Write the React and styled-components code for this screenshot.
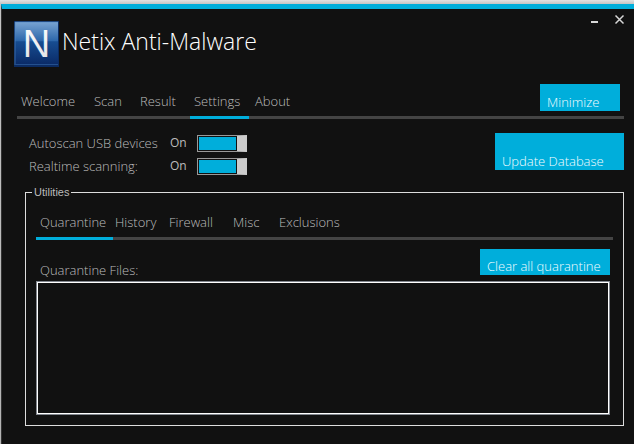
import React, { useState } from "react";
import styled, { createGlobalStyle, css } from "styled-components";

const accent = "#00aedb";
const surface = "#111111";
const rule = "#444444";
const lightFace = css`
  font-family: "Open Sans", "Noto Sans", sans-serif;
  font-weight: 300;
`;

const GlobalStyle = createGlobalStyle`
  * { box-sizing: border-box; }
  body { margin: 0; background: #dcdcdc; }
  button, input, select { font: inherit; margin: 0; border-radius: 0; }
`;

const Desktop = styled.div`
  min-height: 100vh;
  display: flex;
  padding: 4px 0 0 1px;
  background: linear-gradient(#e2e2e2, #c4c4c4 4px, #b4b4b4);
`;

const Window = styled.main`
  ${lightFace}
  flex: 1;
  min-width: 0;
  display: flex;
  flex-direction: column;
  padding: 0 10px 18px 15px;
  border-top: 5px solid ${accent};
  border-left: 1px solid #333333;
  background: ${surface};
  color: #bcbcbc;
  font-size: 13px;
  line-height: 20px;
`;

const Header = styled.header`
  display: flex;
  align-items: flex-start;
  height: 75px;
`;

const Brand = styled.div`
  flex: 1;
  display: flex;
  gap: 3px;
  margin: 12px 0 0 -3px;
`;

const Title = styled.h1`
  margin: 5px 0 0;
  color: #ffffff;
  font-size: 23px;
  font-weight: 300;
  line-height: 30px;
`;

const WindowControls = styled.div`
  display: flex;
  gap: 1px;
  margin-right: -7px;
  padding-top: 1px;
`;

const ControlButton = styled.button`
  width: 24px;
  height: 18px;
  padding: 0;
  border: 0;
  background: transparent;
  color: #d8d8d8;
  svg { display: block; margin: auto; }
`;

const TabRow = styled.div`
  display: flex;
  align-items: flex-start;
  height: ${(p) => p.$height};
  border-bottom: 3px solid ${rule};
`;

const TabList = styled.div`
  flex: 1;
  display: flex;
  align-self: stretch;
`;

const Tab = styled.button`
  flex: none;
  width: ${(p) => p.$width};
  margin-bottom: -3px;
  padding: 0 0 5px ${(p) => p.$inset || "4px"};
  display: flex;
  align-items: flex-end;
  border: 0;
  border-bottom: 3px solid ${(p) => (p.$active ? accent : "transparent")};
  background: transparent;
  color: inherit;
  line-height: 20px;
  white-space: nowrap;
`;

const ActionButton = styled.button`
  flex: none;
  width: ${(p) => p.$width};
  height: ${(p) => p.$height};
  padding: 0 7px;
  display: flex;
  align-items: flex-end;
  border: 0;
  background: ${accent};
  color: #f4fdff;
  line-height: 18px;
  white-space: nowrap;
`;

const MinimizeButton = styled(ActionButton)`
  margin-right: 4px;
`;

const Options = styled.section`
  display: flex;
  align-items: flex-start;
  justify-content: space-between;
  padding: 14px 0 0 12px;
`;

const Switches = styled.div`
  display: grid;
  grid-template-columns: 141px 27px auto;
  row-gap: 3px;
`;

const SwitchRow = styled.label`
  display: grid;
  grid-column: 1 / -1;
  grid-template-columns: subgrid;
  align-items: center;
`;

const SwitchState = styled.span`
  font-size: 12px;
  font-weight: 400;
`;

const Switch = styled.input`
  appearance: none;
  width: 50px;
  height: 17px;
  border: 1px solid #999999;
  border-${(p) => (p.checked ? "right" : "left")}: 10px solid #cccccc;
  outline: 0;
  background: ${(p) => (p.checked ? accent : "#555555")} content-box;
  padding: 1px;
`;

const Utilities = styled.fieldset`
  flex: 1;
  min-width: 0;
  display: flex;
  flex-direction: column;
  margin: 9px 0 0 8px;
  padding: 0 10px 10px;
  border: 1px solid #dddddd;
`;

const Legend = styled.legend`
  margin-left: -4px;
  padding: 0 2px;
  color: #bbbbbb;
  font-family: "Liberation Sans", Arial, sans-serif;
  font-size: 11px;
  font-weight: 400;
  line-height: 14px;
`;

const PanelBody = styled.div`
  flex: 1;
  display: flex;
  flex-direction: column;
  margin-right: 3px;
`;

const PanelHeader = styled.div`
  display: flex;
  align-items: flex-end;
  justify-content: space-between;
  padding: 9px 0 6px 4px;
`;

const FileLabel = styled.label`
  margin-bottom: -5px;
`;

const FileList = styled.select`
  flex: 1;
  width: 100%;
  min-height: 80px;
  border: 1px solid #82878f;
  box-shadow: inset 0 0 0 1px #ffffff;
  outline: 0;
  background: ${surface};
  color: inherit;
`;

const Logo = () => (
  <svg width="45" height="46" viewBox="0 0 45 46" role="img" aria-label="Netix">
    <defs>
      <linearGradient id="tile" x1="0" y1="0" x2="0" y2="1">
        <stop offset="0" stopColor="#78a3d2" />
        <stop offset="0.43" stopColor="#2e68ab" />
        <stop offset="0.46" stopColor="#174d91" />
        <stop offset="1" stopColor="#0a2a66" />
      </linearGradient>
      <linearGradient id="letter" x1="0" y1="0" x2="0" y2="1">
        <stop offset="0" stopColor="#ffffff" />
        <stop offset="1" stopColor="#e0e0e4" />
      </linearGradient>
    </defs>
    <rect width="45" height="46" fill="#0b2b62" />
    <rect x="1" y="1" width="43" height="43" fill="url(#tile)" />
    <path d="M1 44V1H44" fill="none" stroke="#5289c4" strokeOpacity="0.6" />
    <path d="M1 43.5H44" stroke="#24508e" />
    <text
      x="22.5"
      y="36"
      textAnchor="middle"
      fill="url(#letter)"
      fontFamily="Liberation Sans, Arial, sans-serif"
      fontSize="38"
      fontWeight="400"
    >
      N
    </text>
  </svg>
);

const mainTabs = [
  { name: "Welcome", width: "73px" },
  { name: "Scan", width: "46px" },
  { name: "Result", width: "54px" },
  { name: "Settings", width: "59px" },
  { name: "About", width: "60px", inset: "6px" },
];

const utilityTabs = [
  { name: "Quarantine", width: "77px" },
  { name: "History", width: "52px", inset: "2px" },
  { name: "Firewall", width: "64px" },
  { name: "Misc", width: "46px" },
  { name: "Exclusions", width: "72px" },
];

function Tabs({ items, initial, label }) {
  const [current, setCurrent] = useState(initial);
  return (
    <TabList role="tablist" aria-label={label}>
      {items.map(({ name, width, inset }) => (
        <Tab
          key={name}
          type="button"
          role="tab"
          aria-selected={current === name}
          $active={current === name}
          $width={width}
          $inset={inset}
          onClick={() => setCurrent(name)}
        >
          {name}
        </Tab>
      ))}
    </TabList>
  );
}

function SwitchOption({ label }) {
  const [on, setOn] = useState(true);
  return (
    <SwitchRow>
      <span>{label}</span>
      <SwitchState>{on ? "On" : "Off"}</SwitchState>
      <Switch type="checkbox" checked={on} onChange={() => setOn(!on)} />
    </SwitchRow>
  );
}

export default function App() {
  return (
    <>
      <GlobalStyle />
      <Desktop>
        <Window>
          <Header>
            <Brand>
              <Logo />
              <Title>Netix Anti-Malware</Title>
            </Brand>
            <WindowControls>
              <ControlButton type="button" aria-label="Minimize window">
                <svg width="11" height="11" viewBox="0 0 11 11">
                  <path d="M2 8H9" stroke="currentColor" strokeWidth="2" />
                </svg>
              </ControlButton>
              <ControlButton type="button" aria-label="Close window">
                <svg width="11" height="11" viewBox="0 0 11 11">
                  <path d="M1.500 1.500L9.500 9.500M9.500 1.500L1.500 9.500" stroke="currentColor" strokeWidth="1.500" />
                </svg>
              </ControlButton>
            </WindowControls>
          </Header>

          <TabRow $height="35px">
            <Tabs items={mainTabs} initial="Settings" label="Sections" />
            <MinimizeButton type="button" $width="80px" $height="27px">Minimize</MinimizeButton>
          </TabRow>

          <Options>
            <Switches>
              <SwitchOption label="Autoscan USB devices" />
              <SwitchOption label="Realtime scanning:" />
            </Switches>
            <ActionButton type="button" $width="129px" $height="37px">Update Database</ActionButton>
          </Options>

          <Utilities>
            <Legend>Utilities</Legend>
            <TabRow $height="41px">
              <Tabs items={utilityTabs} initial="Quarantine" label="Utilities" />
            </TabRow>
            <PanelBody>
              <PanelHeader>
                <FileLabel htmlFor="quarantine-files">Quarantine Files:</FileLabel>
                <ActionButton type="button" $width="130px" $height="26px">Clear all quarantine</ActionButton>
              </PanelHeader>
              <FileList id="quarantine-files" multiple />
            </PanelBody>
          </Utilities>
        </Window>
      </Desktop>
    </>
  );
}
